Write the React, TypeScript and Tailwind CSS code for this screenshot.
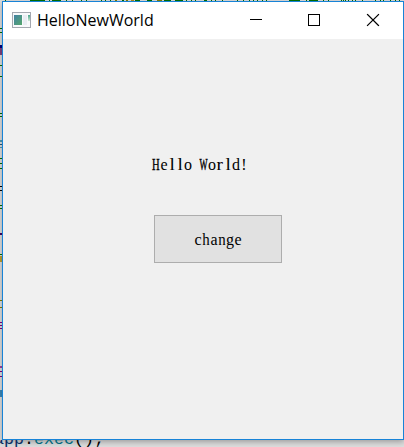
const topTicks: [number, number, string][] = [
  [5, 1, "#007000"], [30, 15, "#007000"], [49, 1, "#007000"], [52, 9, "#007000"], [66, 1, "#007000"],
  [72, 1, "#007000"], [81, 1, "#007000"], [86, 1, "#007000"], [101, 1, "#007000"], [105, 1, "#007000"],
  [110, 1, "#007000"], [115, 2, "#808000"], [122, 2, "#007000"], [126, 2, "#808000"], [131, 3, "#b09020"],
  [135, 5, "#007000"], [147, 5, "#007000"], [157, 5, "#808000"], [164, 7, "#007000"], [175, 8, "#007000"],
  [186, 1, "#007000"], [191, 1, "#007000"], [195, 1, "#007000"], [204, 3, "#007000"], [211, 1, "#007000"],
  [215, 1, "#007000"], [222, 1, "#007000"], [237, 1, "#007000"], [243, 1, "#007000"], [249, 1, "#007000"],
  [253, 1, "#007000"], [257, 1, "#007000"], [262, 1, "#007000"], [266, 1, "#007000"], [289, 11, "#007000"],
  [306, 1, "#007000"], [309, 9, "#007000"], [323, 1, "#007000"], [328, 1, "#007000"], [341, 1, "#007000"],
  [343, 1, "#007000"], [345, 1, "#007000"], [348, 1, "#007000"], [352, 1, "#007000"], [355, 1, "#007000"],
  [362, 1, "#007000"], [375, 1, "#007000"], [380, 1, "#007000"], [383, 1, "#007000"], [390, 1, "#007000"],
  [395, 1, "#007000"], [399, 1, "#007000"],
];
const sideTicks: [number, number, string][] = [
  [28, 1, "#007000"], [32, 1, "#007000"], [45, 3, "#000080"], [48, 7, "#80407c"], [65, 1, "#007000"],
  [76, 1, "#007000"], [113, 1, "#007000"], [116, 1, "#007000"], [140, 2, "#4f9ab5"], [144, 1, "#285878"],
  [147, 1, "#4f9ab5"], [158, 1, "#007000"], [163, 1, "#007000"], [168, 1, "#007000"], [186, 1, "#000"],
  [190, 1, "#000"], [205, 1, "#007000"], [208, 1, "#007000"], [233, 2, "#400060"], [254, 1, "#007000"],
  [256, 6, "#c0a030"], [300, 1, "#808000"], [307, 1, "#808000"], [322, 1, "#800080"], [325, 1, "#800080"],
  [328, 1, "#800080"], [366, 2, "#a040a0"], [371, 1, "#800080"], [376, 1, "#800080"], [390, 7, "#3c88b8"],
];

// Fixed-pitch serif lettering: every character sits in an 8px cell.
function CellText({ text }: { text: string }) {
  return (
    <span className="flex font-['Liberation_Serif',serif] text-[16px] leading-[20px]">
      {[...text].map((ch, i) => (
        <span key={i} className="flex w-[8px] shrink-0 justify-center whitespace-pre">
          <span
            className={
              ch === "W"
                ? "scale-x-[0.53] [-webkit-text-stroke:0.5px_black]"
                : ch === "H"
                  ? "scale-x-[0.66] [-webkit-text-stroke:0.4px_black]"
                  : ch === "l" || ch === "r"
                    ? "scale-x-[1.2]"
                    : ch === "n" || ch === "h"
                      ? "scale-x-[0.93]"
                      : ""
            }
          >
            {ch}
          </span>
        </span>
      ))}
    </span>
  );
}

export default function App() {
  return (
    <div className="relative h-[447px] w-[404px] overflow-hidden bg-[#dedede] pl-[2px] pt-px">
      <svg className="absolute inset-0" width="404" height="447" shapeRendering="crispEdges">
        {topTicks.map(([x, w, c]) => <rect key={x} x={x} y="0" width={w} height="1" fill={c} />)}
        {sideTicks.map(([y, h, c]) => <rect key={y} x="0" y={y} width="2" height={h} fill={c} />)}
      </svg>
      <main className="relative flex h-[439px] w-[402px] flex-col border border-[#1883d7] bg-[#f0f0f0] shadow-[0_2px_6px_rgba(0,0,0,0.3)]">
        <header className="flex h-[37px] shrink-0 items-center bg-white pl-[9px]">
          <svg className="-mt-px" width="19" height="16" viewBox="0 0 19 16" shapeRendering="crispEdges">
            <defs>
              <linearGradient id="pane" x2="1" y2="1">
                <stop stopColor="#4382a4" />
                <stop offset="1" stopColor="#55a66c" />
              </linearGradient>
              <linearGradient id="bar" x2="0" y2="1">
                <stop stopColor="#4aa58c" />
                <stop offset="1" stopColor="#cfe8d4" />
              </linearGradient>
            </defs>
            <rect x=".5" y=".5" width="18" height="15" fill="#f8f9fb" stroke="#a4a8b0" />
            <rect x="2" y="3" width="8" height="10" fill="url(#pane)" />
            <rect x="11" y="3" width="4" height="10" fill="#e8ecf2" />
            <rect x="16" y="3" width="2" height="6" fill="url(#bar)" />
          </svg>
          <h1 className="-mt-px ml-[6px] w-[150px] font-['Open_Sans','Noto_Sans',sans-serif] text-[16px] leading-5 text-black">HelloNewWorld</h1>
          <svg className="ml-auto mr-[3px]" width="172" height="37" fill="none" stroke="#000" shapeRendering="crispEdges">
            <path d="M22 17.5h12" />
            <rect x="80.5" y="12.5" width="11" height="11" />
            <path d="M139.5 12.5l11 11M150.5 12.5l-11 11" shapeRendering="auto" strokeWidth="1.2" strokeLinecap="square" />
          </svg>
        </header>
        <section className="flex flex-col items-start pt-[116px] text-black">
          <p className="ml-[149px] h-[20px]"><CellText text="Hello World!" /></p>
          <button className="ml-[151px] mt-[40px] flex h-[48px] w-[128px] items-center justify-center border border-[#adadad] bg-[#e1e1e1] pt-[2px]">
            <CellText text="change" />
          </button>
        </section>
      </main>
      <div className="absolute -left-[6px] top-[440px] h-[7px] overflow-hidden">
        <div className="-mt-[10px] whitespace-pre font-['Liberation_Mono',monospace] text-[16.67px] leading-[19px]">
          <span className="text-[#092e64]">app</span>.<span className="text-[#00677c]">exec</span>();
        </div>
      </div>
    </div>
  );
}
